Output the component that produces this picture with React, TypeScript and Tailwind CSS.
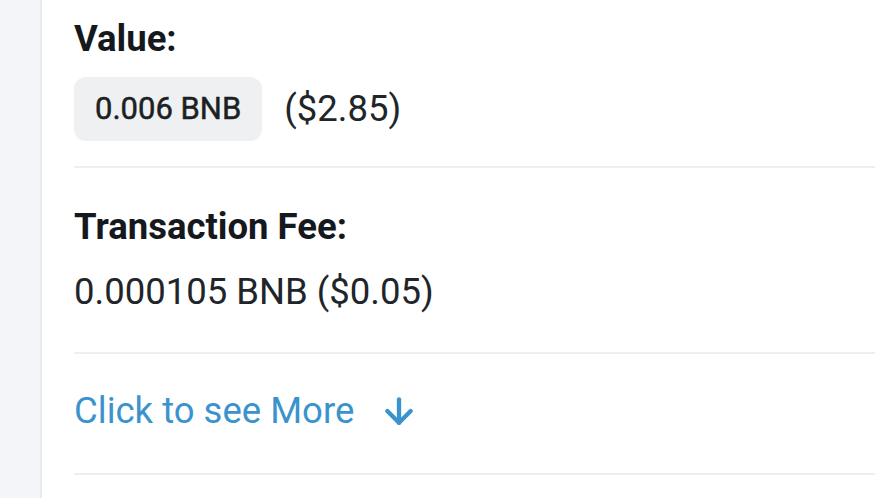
import { ArrowDown } from "lucide-react";

export default function App() {
  return (
    <div className="flex h-[498px] w-[875px] overflow-hidden bg-white font-['Roboto',sans-serif]">
      <div className="w-[42px] shrink-0 border-r-2 border-[#e8eaed] bg-[#f4f5f8]" />

      <div className="flex-1 pl-[32px]">
        <section className="border-b-2 border-[#eceef0] pt-[18px] pb-[25px]">
          <h3 className="text-[36.5px] leading-[42px] font-bold text-[#15181d]">
            Value:
          </h3>
          <div className="mt-[17px] flex items-center gap-[22px]">
            <span className="flex h-[64px] items-center rounded-[12px] bg-[#eff0f2] px-[21px] text-[31px] font-normal text-[#1c1f23] [-webkit-text-stroke:0.5px_#1c1f23]">
              0.006 BNB
            </span>
            <span className="text-[36.5px] leading-[42px] text-[#212529]">
              ($2.85)
            </span>
          </div>
        </section>

        <section className="border-b-2 border-[#eceef0] pt-[38px] pb-[39px]">
          <h3 className="text-[36.5px] leading-[42px] font-bold text-[#15181d]">
            Transaction Fee:
          </h3>
          <p className="mt-[23px] text-[36.5px] leading-[42px] text-[#212529]">
            0.000105 BNB ($0.05)
          </p>
        </section>

        <section className="border-b-2 border-[#eceef0] pt-[36px] pb-[41px]">
          <button className="flex items-center gap-[25px] text-[36.5px] leading-[42px] text-[#3b93cd]">
            Click to see More
            <ArrowDown size={40} strokeWidth={2.6} />
          </button>
        </section>
      </div>
    </div>
  );
}
